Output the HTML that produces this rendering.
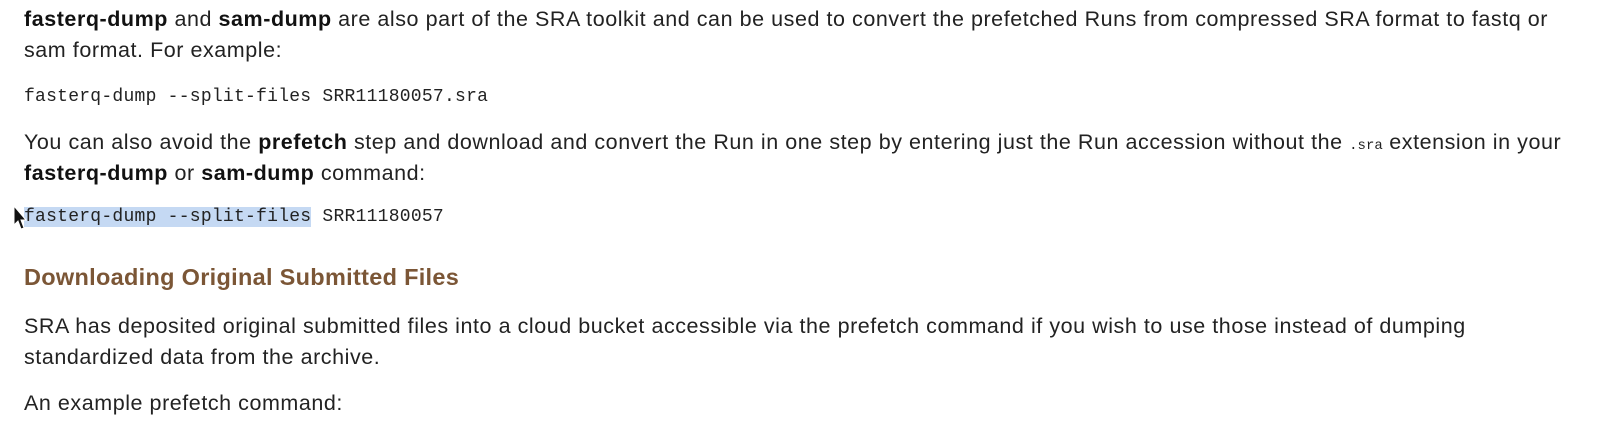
<!DOCTYPE html>
<html><head><style>
body{margin:0;width:1598px;height:438px;background:#fff;overflow:hidden;font-family:"Liberation Sans",sans-serif;color:#222;}
.t{position:absolute;left:24px;font-size:21.5px;letter-spacing:0.55px;line-height:31px;white-space:nowrap;}
.c{position:absolute;left:24px;font-family:"Liberation Mono",monospace;font-size:18px;color:#222;white-space:nowrap;letter-spacing:0.25px;}
b{font-weight:bold;color:#111}
.sel{background:#c5d9f3}
h3{position:absolute;left:24px;top:264px;margin:0;font-size:23.5px;letter-spacing:0.3px;color:#7b5636;font-weight:bold;}
code{font-family:"Liberation Mono",monospace;font-size:14px;letter-spacing:0;line-height:0;}
</style></head><body>
<div class="t" style="top:4px"><b>fasterq-dump</b> and <b>sam-dump</b> are also part of the SRA toolkit and can be used to convert the prefetched Runs from compressed SRA format to fastq or<br>sam format. For example:</div>
<div class="c" style="top:87px">fasterq-dump --split-files SRR11180057.sra</div>
<div class="t" style="top:127px">You can also avoid the <b>prefetch</b> step and download and convert the Run in one step by entering just the Run accession without the <code>.sra</code> extension in your<br><b>fasterq-dump</b> or <b>sam-dump</b> command:</div>
<div class="c" style="top:207px"><span class="sel">fasterq-dump --split-files</span> SRR11180057</div>
<svg style="position:absolute;left:13px;top:205px" width="14" height="26" viewBox="0 0 14 26"><path d="M1 1 L1 20 L5 16 L8 24 L11 23 L8 15 L13 15 Z" fill="#111" stroke="#fff" stroke-width="1"/></svg>
<h3>Downloading Original Submitted Files</h3>
<div class="t" style="top:311px">SRA has deposited original submitted files into a cloud bucket accessible via the prefetch command if you wish to use those instead of dumping<br>standardized data from the archive.</div>
<div class="t" style="top:388px">An example prefetch command:</div>
</body></html>
